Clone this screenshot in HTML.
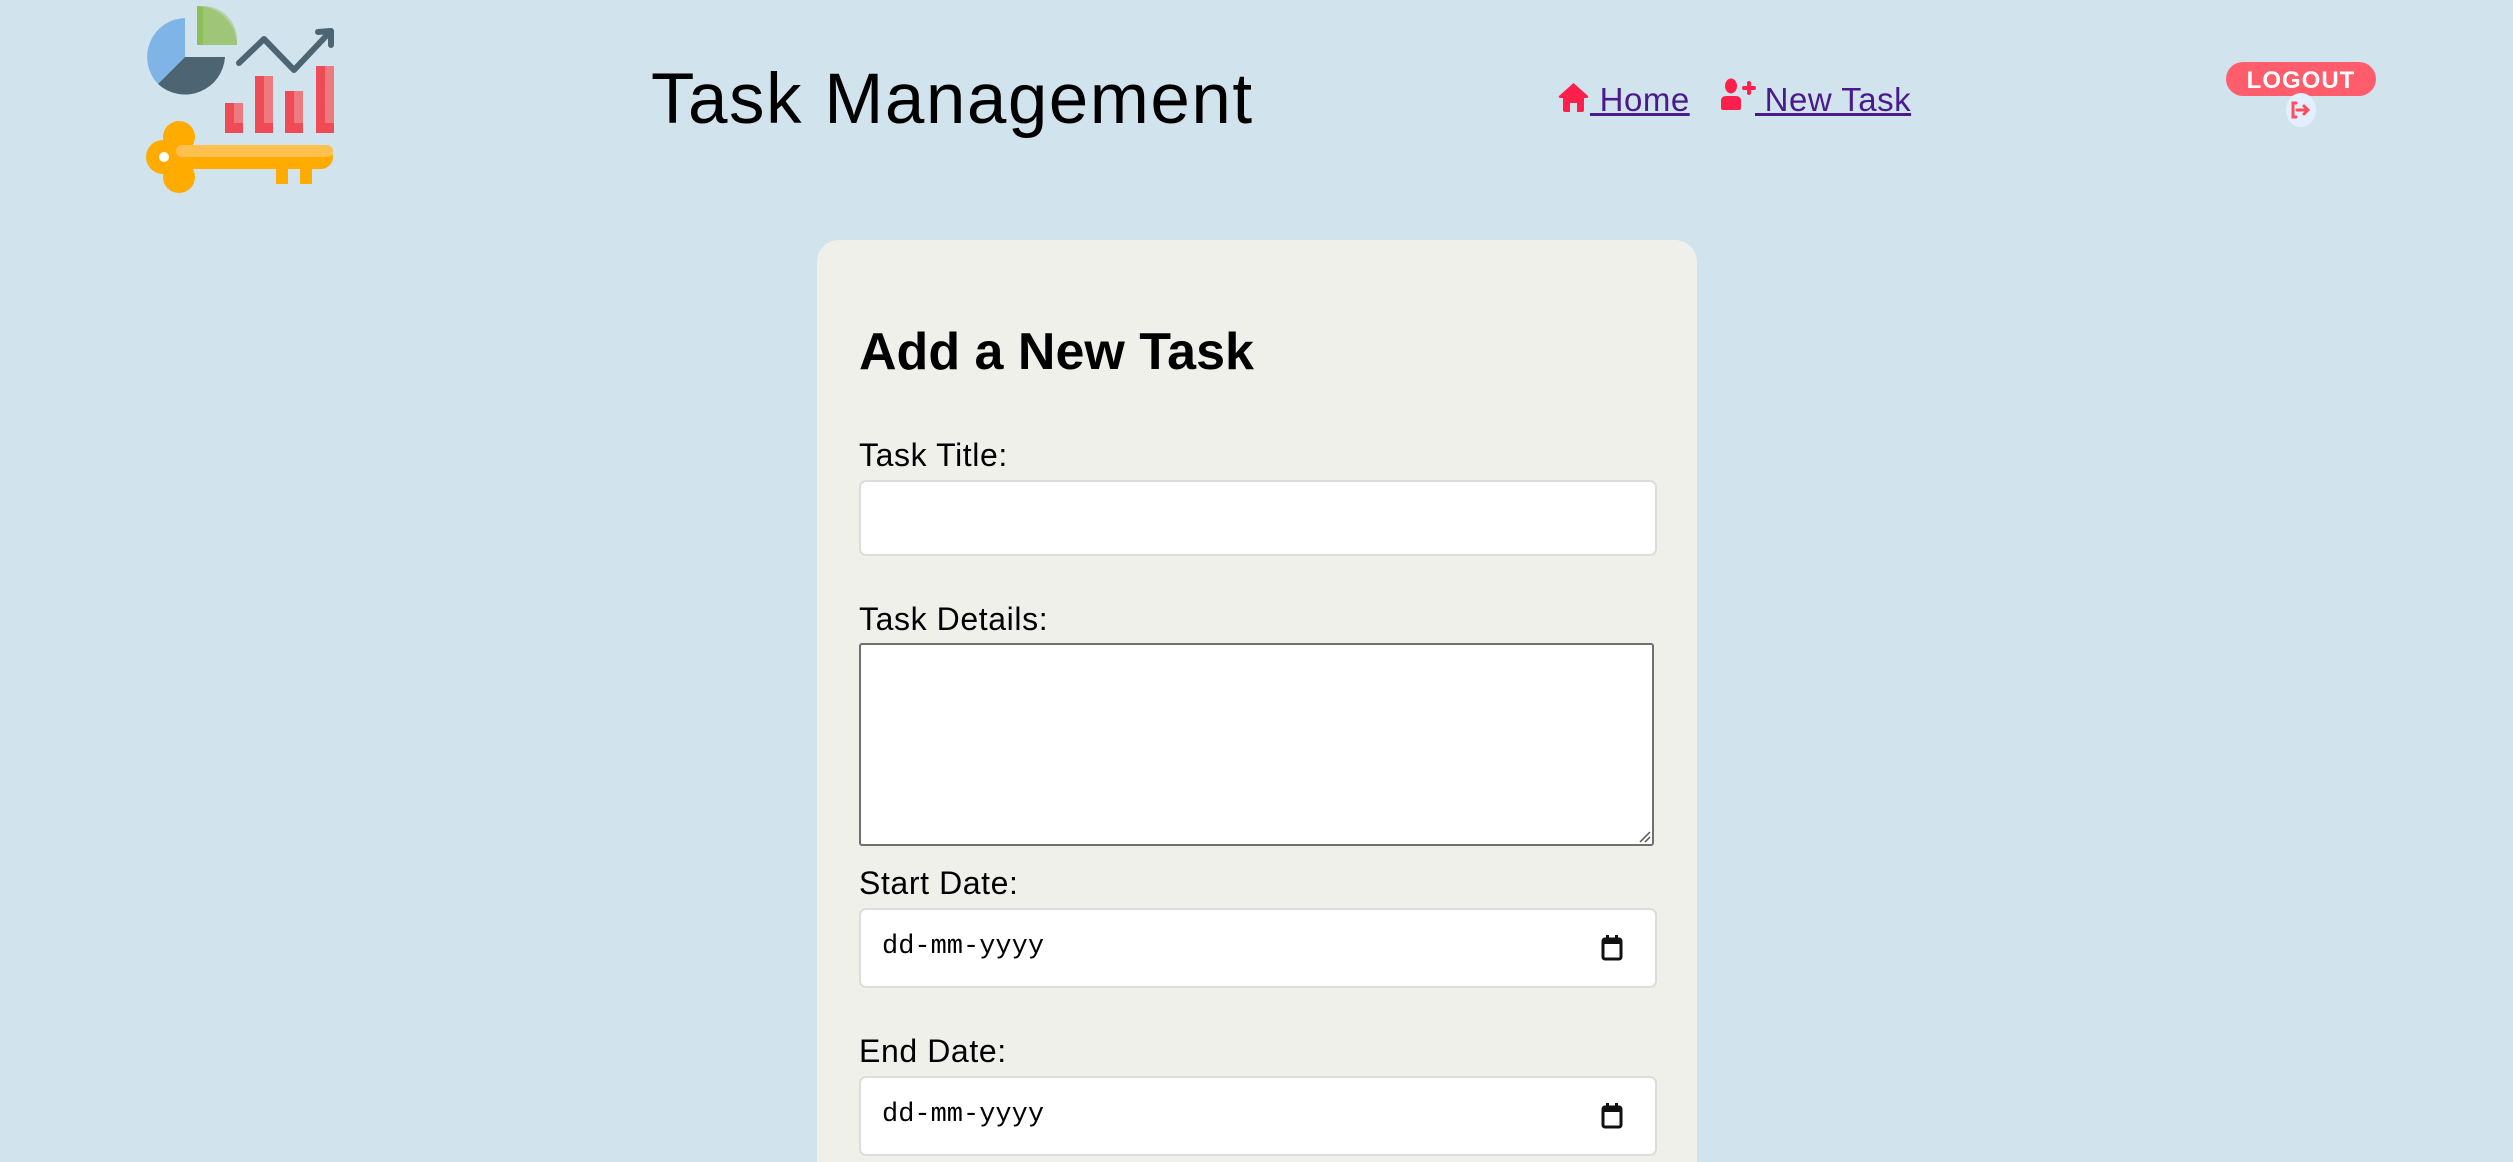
<!DOCTYPE html>
<html><head><meta charset="utf-8"><style>
html,body{margin:0;padding:0;overflow:hidden}
body{width:2513px;height:1162px;background:#d1e3ed;position:relative;overflow:hidden;font-family:"Liberation Sans",sans-serif;color:#000}
.abs{position:absolute}
.title{left:651px;top:58px;font-size:71px;line-height:84px;white-space:nowrap;letter-spacing:1.5px}
.nav a{position:absolute;color:#4a1a8c;font-size:33px;line-height:38px;text-decoration:underline;text-decoration-thickness:3px;white-space:nowrap;letter-spacing:0.5px}
.card{left:817px;top:240px;width:880px;height:922px;background:#f0f0eb;border-radius:22px 22px 0 0}
h1{position:absolute;left:859px;top:322px;margin:0;font-size:52px;line-height:60px;font-weight:bold;letter-spacing:0}
.lbl{position:absolute;left:859px;font-size:32px;line-height:36px;letter-spacing:0.6px}
.inp{position:absolute;left:859px;width:794px;background:#fff;border:2px solid #dcdcdc;border-radius:7px}
.ta{border:2px solid #6f6f6f;border-radius:3px}
.date{font-family:"Liberation Mono",monospace;font-size:27px;color:#000}
</style></head><body>
<svg class="abs" style="left:0;top:0" width="400" height="200" viewBox="0 0 400 200">
  <path d="M185 57 L185 18 A39 39 0 0 0 158 84 Z" fill="#7eb4e6"/>
  <path d="M185 57 L225 57 A40 40 0 0 1 158 84 Z" fill="#4d6473"/>
  <path d="M197 6 A40 40 0 0 1 237 45 L197 45 Z" fill="#8cbf5a"/>
  <path d="M203 6 A34 34 0 0 1 237 40 L237 45 L203 45 Z" fill="#a7c985" opacity="0.7"/>
  <polyline points="239,63 264,39 294,70 328,34" fill="none" stroke="#4d6473" stroke-width="6" stroke-linecap="round" stroke-linejoin="round"/>
  <polyline points="318,32 331,31 331,45" fill="none" stroke="#4d6473" stroke-width="6" stroke-linecap="round" stroke-linejoin="round"/>
  <rect x="225" y="103" width="18" height="30" fill="#ef4b57"/>
  <rect x="255" y="76" width="18" height="57" fill="#ef4b57"/>
  <rect x="285" y="91" width="18" height="42" fill="#ef4b57"/>
  <rect x="316" y="66" width="18" height="67" fill="#ef4b57"/>
  <rect x="234" y="103" width="9" height="20" fill="#ee7a80"/>
  <rect x="264" y="76" width="9" height="47" fill="#ee7a80"/>
  <rect x="294" y="91" width="9" height="32" fill="#ee7a80"/>
  <rect x="325" y="66" width="9" height="57" fill="#ee7a80"/>
  <circle cx="179" cy="137" r="16" fill="#ffab00"/>
  <circle cx="179" cy="177" r="16" fill="#ffab00"/>
  <circle cx="163" cy="157" r="17" fill="#ffab00"/>
  <rect x="170" y="145" width="163" height="24" rx="12" fill="#ffab00"/>
  <rect x="176" y="145" width="157" height="12" rx="6" fill="#ffc04d"/>
  <rect x="276" y="165" width="12" height="19" fill="#ffab00"/>
  <rect x="300" y="165" width="12" height="19" fill="#ffab00"/>
  <circle cx="164" cy="157" r="5" fill="#ffffff"/>
</svg>
<div class="abs title">Task Management</div>
<div class="nav">
<svg class="abs" style="left:1558px;top:82px" width="31" height="30" viewBox="0 0 31 30"><path d="M15.5 1 L30 14 Q31 16 28 16 L26 16 L26 28 Q26 30 24 30 L19 30 L19 21 L12 21 L12 30 L7 30 Q5 30 5 28 L5 16 L3 16 Q0 16 1 14 Z" fill="#ff1f4b"/></svg>
<a style="left:1590px;top:81px">&nbsp;Home</a>
<svg class="abs" style="left:1721px;top:78px" width="36" height="32" viewBox="0 0 36 32"><ellipse cx="10" cy="8" rx="6" ry="7.5" fill="#ff1f4b"/><path d="M0 30 L0 23 Q0 18 5 18 L15 18 Q20 18 20 23 L20 30 Q20 32 18 32 L2 32 Q0 32 0 30Z" fill="#ff1f4b"/><rect x="26" y="3" width="4" height="14" rx="2" fill="#ff1f4b"/><rect x="21" y="8" width="14" height="4" rx="2" fill="#ff1f4b"/></svg>
<a style="left:1755px;top:81px">&nbsp;New Task</a>
</div>
<svg class="abs" style="left:2222px;top:60px" width="160" height="68" viewBox="0 0 160 68">
  <rect x="4" y="2" width="150" height="34" rx="17" fill="#ff5d6c"/>
  <text x="79" y="28" text-anchor="middle" font-family="Liberation Sans" font-weight="bold" font-size="24" fill="#fff" letter-spacing="1">LOGOUT</text>
  <ellipse cx="79" cy="50" rx="15" ry="17" fill="#e3efff"/>
  <path d="M74 43 L71 43 L71 57 L74 57 M75 50 L86 50 M82 46 L86 50 L82 54" fill="none" stroke="#ff4d5e" stroke-width="3" stroke-linecap="round"/>
</svg>
<div class="abs card"></div>
<h1>Add a New Task</h1>
<div class="lbl" style="top:437px">Task Title:</div>
<div class="inp" style="top:480px;height:72px"></div>
<div class="lbl" style="top:601px">Task Details:</div>
<div class="inp ta" style="top:643px;height:199px;width:791px"><svg class="abs" style="right:1px;bottom:1px" width="14" height="14"><path d="M13 3 L3 13 M13 8 L8 13" stroke="#555" stroke-width="1.5"/></svg></div>
<div class="lbl" style="top:865px">Start Date:</div>
<div class="inp" style="top:908px;height:76px"><span class="abs date" style="left:21px;top:22px">dd-mm-yyyy</span><svg class="abs" style="left:740px;top:25px" width="22" height="26" viewBox="0 0 22 26"><rect x="2" y="4" width="18" height="20" rx="2" fill="none" stroke="#111" stroke-width="3"/><rect x="2" y="4" width="18" height="5" fill="#111"/><rect x="5" y="0" width="3" height="5" fill="#111"/><rect x="14" y="0" width="3" height="5" fill="#111"/></svg></div>
<div class="lbl" style="top:1033px">End Date:</div>
<div class="inp" style="top:1076px;height:76px"><span class="abs date" style="left:21px;top:22px">dd-mm-yyyy</span><svg class="abs" style="left:740px;top:25px" width="22" height="26" viewBox="0 0 22 26"><rect x="2" y="4" width="18" height="20" rx="2" fill="none" stroke="#111" stroke-width="3"/><rect x="2" y="4" width="18" height="5" fill="#111"/><rect x="5" y="0" width="3" height="5" fill="#111"/><rect x="14" y="0" width="3" height="5" fill="#111"/></svg></div>
</body></html>
